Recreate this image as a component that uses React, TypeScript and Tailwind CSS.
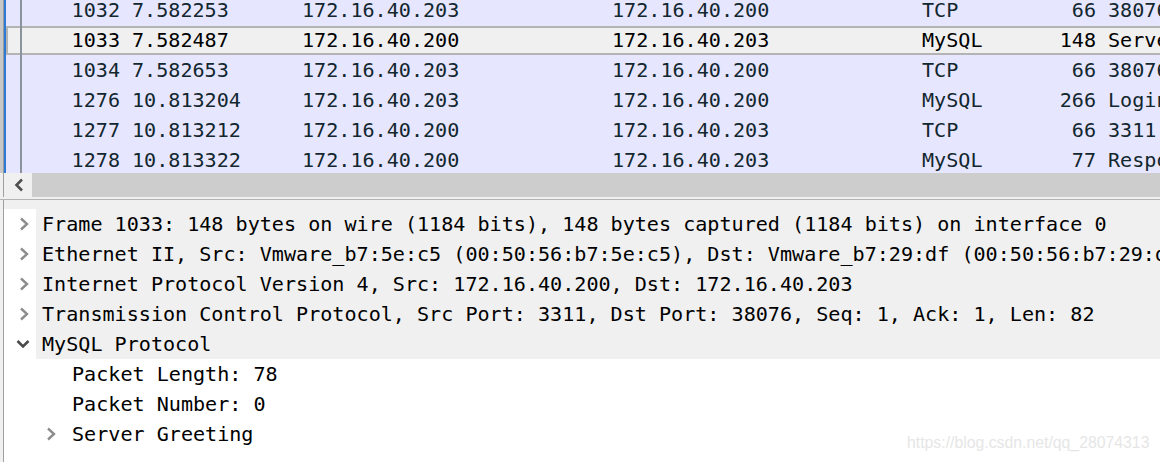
import React from "react";

type Row = { no: string; time: string; src: string; dst: string; proto: string; len: string; info: string; sel?: boolean };

const rows: Row[] = [
  { no: "1032", time: "7.582253", src: "172.16.40.203", dst: "172.16.40.200", proto: "TCP", len: "66", info: "38076 → 3311 [ACK] Seq=1 Ack=1 Win=29312 Len=0" },
  { no: "1033", time: "7.582487", src: "172.16.40.200", dst: "172.16.40.203", proto: "MySQL", len: "148", info: "Server Greeting proto=10 version=5.7.26-log", sel: true },
  { no: "1034", time: "7.582653", src: "172.16.40.203", dst: "172.16.40.200", proto: "TCP", len: "66", info: "38076 → 3311 [ACK] Seq=1 Ack=83 Win=29312 Len=0" },
  { no: "1276", time: "10.813204", src: "172.16.40.203", dst: "172.16.40.200", proto: "MySQL", len: "266", info: "Login Request user=root db=test" },
  { no: "1277", time: "10.813212", src: "172.16.40.200", dst: "172.16.40.203", proto: "TCP", len: "66", info: "3311 → 38076 [ACK] Seq=83 Ack=201 Win=30080 Len=0" },
  { no: "1278", time: "10.813322", src: "172.16.40.200", dst: "172.16.40.203", proto: "MySQL", len: "77", info: "Response OK" },
];

const heights = ["h-[31px]", "h-[29px]", "h-[30px]", "h-[30px]", "h-[30px]", "h-[30px]"];

function Right({ className = "" }: { className?: string }) {
  return (
    <svg width="10" height="14" viewBox="0 0 10 14" className={className}>
      <polyline points="2,1.5 8,7 2,12.5" fill="none" stroke="#8c8c8c" strokeWidth="2.4" />
    </svg>
  );
}

function Down() {
  return (
    <svg width="14" height="10" viewBox="0 0 14 10">
      <polyline points="1.5,2 7,7.5 12.5,2" fill="none" stroke="#4a4a4a" strokeWidth="2.6" />
    </svg>
  );
}

function Left() {
  return (
    <svg width="10" height="14" viewBox="0 0 10 14">
      <polyline points="8,1.5 2.5,7 8,12.5" fill="none" stroke="#505050" strokeWidth="2.6" />
    </svg>
  );
}

function DetailRow({ text, chevron, indent, shaded }: { text: string; chevron?: "right" | "down"; indent?: boolean; shaded?: boolean }) {
  return (
    <div className="flex h-[30px] items-center">
      <div className="w-[32px] h-full flex items-center justify-center shrink-0">
        {chevron === "right" && !indent ? <Right className="ml-[7px]" /> : null}
        {chevron === "down" ? <div className="ml-[6px] flex"><Down /></div> : null}
      </div>
      <div className={`flex-1 h-full flex items-center pl-[6px] whitespace-pre overflow-hidden ${shaded ? "bg-[#f0f0f0]" : ""}`}>
        {indent ? (
          <>
            <div className="w-[30px] h-full flex items-center shrink-0">
              {chevron === "right" ? <Right className="ml-[4px]" /> : null}
            </div>
            <span>{text}</span>
          </>
        ) : (
          <span>{text}</span>
        )}
      </div>
    </div>
  );
}

export default function App() {
  return (
    <div
      className="relative w-[1160px] h-[462px] overflow-hidden bg-white text-[20.1px] leading-none"
      style={{ fontFamily: '"DejaVu Sans Mono", "Liberation Mono", monospace' }}
    >
      {/* packet list */}
      <div className="flex h-[173px] overflow-hidden">
        <div className="w-[3px] shrink-0 bg-[#c8c8c8]" />
        <div className="w-[1px] shrink-0 bg-[#9a9a9a]" />
        <div className="w-[2px] shrink-0 bg-[#2b7bd6]" />
        <div className="flex-1 -mt-[5px] flex flex-col text-[#12272e]">
          {rows.map((r, i) => (
            <div
              key={r.no}
              className={`flex shrink-0 whitespace-pre ${heights[i]} ${
                r.sel ? "bg-[#f0f0f0] text-black shadow-[inset_0_0_0_2px_#b4b4b4]" : "bg-[#e7e6ff]"
              }`}
            >
              <div className="w-[16px] shrink-0 border-r-2 border-[#8b939c]" />
              <div className="w-[98px] shrink-0 flex items-center justify-end">{r.no}</div>
              <div className="w-[170px] shrink-0 flex items-center pl-[12px]">{r.time}</div>
              <div className="w-[310px] shrink-0 flex items-center pl-[12px]">{r.src}</div>
              <div className="w-[310px] shrink-0 flex items-center pl-[12px]">{r.dst}</div>
              <div className="w-[90px] shrink-0 flex items-center pl-[12px]">{r.proto}</div>
              <div className="w-[96px] shrink-0 flex items-center justify-end">{r.len}</div>
              <div className="flex-1 flex items-center pl-[12px] overflow-hidden">{r.info}</div>
            </div>
          ))}
        </div>
      </div>

      {/* horizontal scrollbar */}
      <div className="flex h-[24px]">
        <div className="w-[4px] shrink-0 bg-[#f0f0f0] border-r border-[#a0a0a0]" />
        <div className="w-[2px] shrink-0 bg-[#f0f0f0]" />
        <div className="w-[26px] shrink-0 bg-[#f0f0f0] flex items-center justify-center">
          <Left />
        </div>
        <div className="flex-1 bg-[#cdcdcd]" />
      </div>

      {/* splitter */}
      <div className="h-[2px] bg-[#f0f0f0]" />
      <div className="h-[1px] bg-[#b4b4b4]" />

      {/* details pane */}
      <div className="flex h-[263px]">
        <div className="w-[3px] shrink-0 bg-[#f0f0f0]" />
        <div className="w-[1px] shrink-0 bg-[#a0a0a0]" />
        <div className="flex-1 flex flex-col text-black">
          <div className="h-[9px] bg-[#f0f0f0] shrink-0" />
          <DetailRow chevron="right" shaded text="Frame 1033: 148 bytes on wire (1184 bits), 148 bytes captured (1184 bits) on interface 0" />
          <DetailRow chevron="right" shaded text="Ethernet II, Src: Vmware_b7:5e:c5 (00:50:56:b7:5e:c5), Dst: Vmware_b7:29:df (00:50:56:b7:29:df)" />
          <DetailRow chevron="right" shaded text="Internet Protocol Version 4, Src: 172.16.40.200, Dst: 172.16.40.203" />
          <DetailRow chevron="right" shaded text="Transmission Control Protocol, Src Port: 3311, Dst Port: 38076, Seq: 1, Ack: 1, Len: 82" />
          <DetailRow chevron="down" shaded text="MySQL Protocol" />
          <DetailRow indent text="Packet Length: 78" />
          <DetailRow indent text="Packet Number: 0" />
          <DetailRow indent chevron="right" text="Server Greeting" />
        </div>
      </div>

      {/* watermark */}
      <div
        className="absolute left-[907px] top-[435px] text-[15.8px] text-[#e6e6e6] whitespace-nowrap"
        style={{ fontFamily: '"Liberation Sans", Arial, sans-serif' }}
      >
        https://blog.csdn.net/qq_28074313
      </div>
    </div>
  );
}
